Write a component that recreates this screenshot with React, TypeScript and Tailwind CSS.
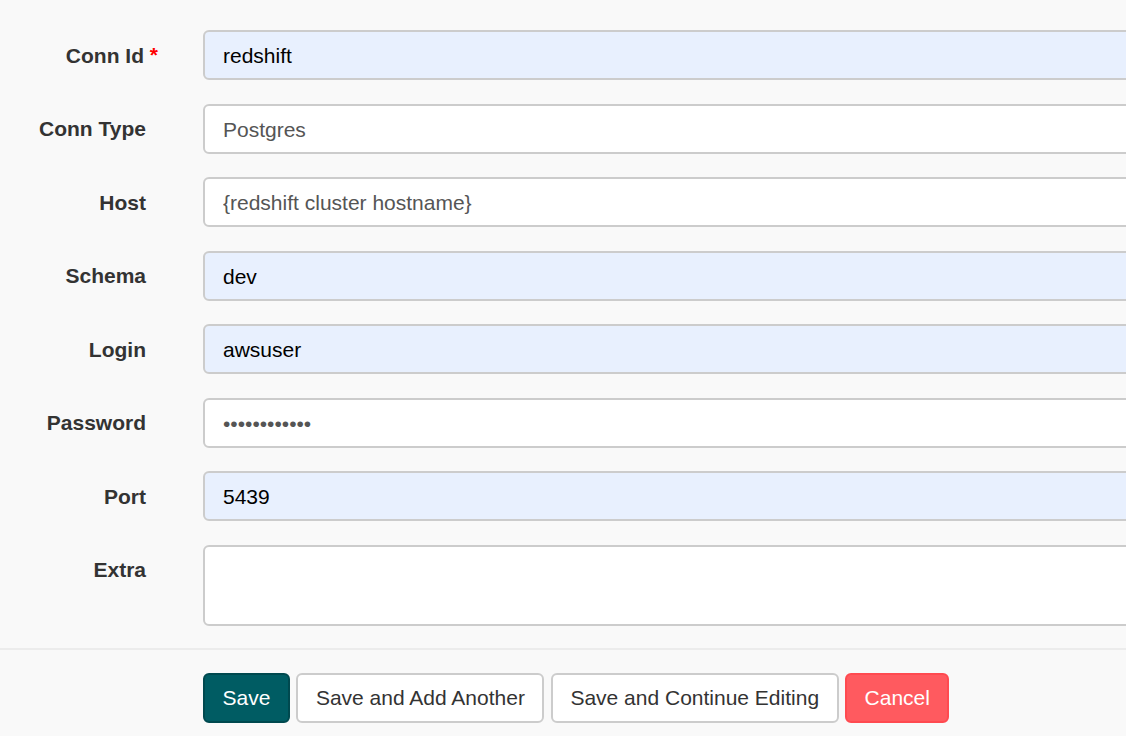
const fields = [
  { label: 'Conn Id', value: 'redshift', filled: true, required: true },
  { label: 'Conn Type', value: 'Postgres', filled: false },
  { label: 'Host', value: '{redshift cluster hostname}', filled: false },
  { label: 'Schema', value: 'dev', filled: true },
  { label: 'Login', value: 'awsuser', filled: true },
  { label: 'Password', value: 'secretpasswd', filled: false, password: true },
  { label: 'Port', value: '5439', filled: true },
];

const inputBase =
  'w-full h-[50px] border-2 border-[#cccccc] rounded-[6px] pl-[18px] pr-3 pt-[2px] text-[21px] outline-none';

const btn = 'h-[50px] rounded-[6px] border-2 px-[17.5px] text-[21px]';

export default function App() {
  return (
    <div
      className="min-h-[736px] w-[1126px] overflow-hidden bg-[#f9f9f9] text-[#333333]"
      style={{ fontFamily: '"Liberation Sans", Arial, sans-serif' }}
    >
      <form className="flex flex-col gap-[23.5px] pt-[30px]">
        {fields.map((f) => (
          <div key={f.label} className="flex items-center">
            <label className="relative w-[146px] shrink-0 pt-[1px] text-right text-[21px] font-bold">
              <span className={f.required ? 'mr-[2px]' : ''}>{f.label}</span>
              {f.required && (
                <span className="absolute right-[-12px] top-[0px] text-[21px] font-bold text-[#ff0000]">*</span>
              )}
            </label>
            <div className="ml-[57px] w-[940px] shrink-0">
              <input
                readOnly
                type={f.password ? 'password' : 'text'}
                value={f.value}
                className={`${inputBase} ${
                  f.filled ? 'bg-[#e8f0fe] text-black' : 'bg-white text-[#555555]'
                }`}
              />
            </div>
          </div>
        ))}
        <div className="flex items-start">
          <label className="w-[146px] shrink-0 pt-[9px] text-right text-[21px] font-bold">Extra</label>
          <div className="ml-[57px] w-[940px] shrink-0">
            <textarea
              readOnly
              className="block h-[81px] w-full resize-none rounded-[6px] border-2 border-[#cccccc] bg-white outline-none"
            />
          </div>
        </div>
      </form>

      <div className="mt-[22px] border-t-2 border-[#ececec]" />

      <div className="flex gap-[6.5px] pl-[203px] pt-[23px]">
        <button className={`${btn} border-[#00494f] bg-[#005c63] text-white`}>Save</button>
        <button className={`${btn} border-[#cccccc] bg-white text-[#333333]`}>Save and Add Another</button>
        <button className={`${btn} border-[#cccccc] bg-white text-[#333333]`}>Save and Continue Editing</button>
        <button className={`${btn} border-[#ff4a50] bg-[#ff5a5f] text-white`}>Cancel</button>
      </div>
    </div>
  );
}
